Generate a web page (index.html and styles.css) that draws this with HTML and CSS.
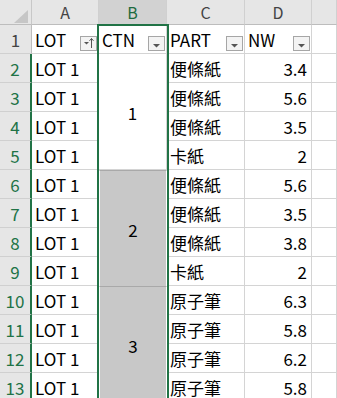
FILE: index.html
```html
<!DOCTYPE html>
<html>
<head>
<meta charset="utf-8">
<link rel="stylesheet" href="styles.css">
</head>
<body>
<div class="sheet">
  <div class="grid">
    <div class="corner"><svg class="corner-tri" width="14" height="13" viewBox="0 0 14 13"><polygon points="14,0 14,13 0,13" fill="#c6c6c6"/></svg></div>
    <div class="colhead">A</div>
    <div class="colhead sel">B</div>
    <div class="colhead">C</div>
    <div class="colhead">D</div>
    <div class="colhead"></div>

    <div class="rowhead">1</div>
    <div class="cell hdr"><span>LOT</span><span class="fbtn"><svg width="15" height="13" viewBox="0 0 15 13"><polygon points="3,5 8,5 5.5,7.5" fill="#555"/><path d="M10.5 1.5 V11" stroke="#555" stroke-width="1"/><path d="M8.5 3.8 L10.5 1.5 L12.5 3.8" stroke="#555" stroke-width="1" fill="none"/></svg></span></div>
    <div class="cell hdr"><span>CTN</span><span class="fbtn"><svg width="15" height="13" viewBox="0 0 15 13"><polygon points="4,7 11,7 7.5,10.5" fill="#555"/></svg></span></div>
    <div class="cell hdr"><span>PART</span><span class="fbtn"><svg width="15" height="13" viewBox="0 0 15 13"><polygon points="4,7 11,7 7.5,10.5" fill="#555"/></svg></span></div>
    <div class="cell hdr"><span>NW</span><span class="fbtn"><svg width="15" height="13" viewBox="0 0 15 13"><polygon points="4,7 11,7 7.5,10.5" fill="#555"/></svg></span></div>
    <div class="cell"></div>

    <div class="rowhead sel">2</div>
    <div class="cell">LOT 1</div>
    <div class="merge white">1</div>
    <div class="cell">便條紙</div>
    <div class="cell num">3.4</div>
    <div class="cell"></div>

    <div class="rowhead sel">3</div>
    <div class="cell">LOT 1</div>
    <div class="cell">便條紙</div>
    <div class="cell num">5.6</div>
    <div class="cell"></div>

    <div class="rowhead sel">4</div>
    <div class="cell">LOT 1</div>
    <div class="cell">便條紙</div>
    <div class="cell num">3.5</div>
    <div class="cell"></div>

    <div class="rowhead sel">5</div>
    <div class="cell">LOT 1</div>
    <div class="cell">卡紙</div>
    <div class="cell num">2</div>
    <div class="cell"></div>

    <div class="rowhead sel">6</div>
    <div class="cell">LOT 1</div>
    <div class="merge gray">2</div>
    <div class="cell">便條紙</div>
    <div class="cell num">5.6</div>
    <div class="cell"></div>

    <div class="rowhead sel">7</div>
    <div class="cell">LOT 1</div>
    <div class="cell">便條紙</div>
    <div class="cell num">3.5</div>
    <div class="cell"></div>

    <div class="rowhead sel">8</div>
    <div class="cell">LOT 1</div>
    <div class="cell">便條紙</div>
    <div class="cell num">3.8</div>
    <div class="cell"></div>

    <div class="rowhead sel">9</div>
    <div class="cell">LOT 1</div>
    <div class="cell">卡紙</div>
    <div class="cell num">2</div>
    <div class="cell"></div>

    <div class="rowhead sel">10</div>
    <div class="cell">LOT 1</div>
    <div class="merge gray">3</div>
    <div class="cell">原子筆</div>
    <div class="cell num">6.3</div>
    <div class="cell"></div>

    <div class="rowhead sel">11</div>
    <div class="cell">LOT 1</div>
    <div class="cell">原子筆</div>
    <div class="cell num">5.8</div>
    <div class="cell"></div>

    <div class="rowhead sel">12</div>
    <div class="cell">LOT 1</div>
    <div class="cell">原子筆</div>
    <div class="cell num">6.2</div>
    <div class="cell"></div>

    <div class="rowhead sel">13</div>
    <div class="cell">LOT 1</div>
    <div class="cell">原子筆</div>
    <div class="cell num">5.8</div>
    <div class="cell"></div>
  </div>
  <div class="selection"></div>
</div>
</body>
</html>
```

FILE: styles.css
```css
* { box-sizing: border-box; }
html, body {
  margin: 0;
  padding: 0;
  background: #ffffff;
  overflow: hidden;
}
.sheet {
  position: relative;
  width: 337px;
  height: 398px;
  overflow: hidden;
  font-family: "Noto Sans CJK TC", "Noto Sans", sans-serif;
  font-size: 17px;
  color: #000;
}
.grid {
  display: grid;
  grid-template-columns: 32px 67px 68px 78px 67px 1fr;
  grid-template-rows: 25px repeat(13, 29px);
}
.corner {
  background: #e6e6e6;
  border-right: 1px solid #c8c8c8;
  border-bottom: 1px solid #bdbdbd;
  display: flex;
  align-items: flex-end;
  justify-content: flex-end;
  padding: 0 3px 1px 0;
}
.corner-tri { display: block; }
.colhead {
  background: #e6e6e6;
  border-right: 1px solid #d0d0d0;
  border-bottom: 1px solid #bdbdbd;
  display: flex;
  align-items: center;
  justify-content: center;
  font-size: 16px;
  line-height: 1;
  color: #444;
}
.colhead.sel {
  background: #d2d2d2;
  color: #1e6b40;
}
.rowhead {
  background: #e6e6e6;
  border-right: 1px solid #bdbdbd;
  border-bottom: 1px solid #d0d0d0;
  display: flex;
  align-items: center;
  justify-content: center;
  font-size: 17px;
  line-height: 1;
  color: #444;
  padding-top: 1px;
}
.rowhead.sel {
  border-right: 2px solid #217346;
  color: #217346;
}
.cell {
  border-right: 1px solid #d4d4d4;
  border-bottom: 1px solid #d4d4d4;
  display: flex;
  align-items: center;
  padding: 1px 3px 0 3px;
  line-height: 1;
  white-space: nowrap;
  overflow: hidden;
}
.cell.num {
  justify-content: flex-end;
  padding-right: 4px;
}
.cell.hdr {
  justify-content: space-between;
  padding-right: 1px;
}
.fbtn {
  align-self: flex-end;
  margin-bottom: 2px;
  width: 17px;
  height: 15px;
  border: 1px solid #a6a6a6;
  background: #f3f3f3;
  display: flex;
  align-items: center;
  justify-content: center;
}
.fbtn svg { display: block; }
.merge {
  grid-row: span 4;
  display: flex;
  align-items: center;
  justify-content: center;
  line-height: 1;
  padding-top: 1px;
  border-right: 1px solid #d4d4d4;
  border-bottom: 1px solid #d4d4d4;
}
.merge.white { background: #fff; }
.merge.gray {
  background: #c8c8c8;
  border-left: 1px solid #fff;
  border-right: 1px solid #fff;
  border-top: 1px solid #a9a9a9;
  border-bottom: none;
}
.selection {
  position: absolute;
  left: 97px;
  top: 24px;
  width: 72px;
  height: 380px;
  border: 2px solid #217346;
  border-bottom: none;
  pointer-events: none;
}
```
